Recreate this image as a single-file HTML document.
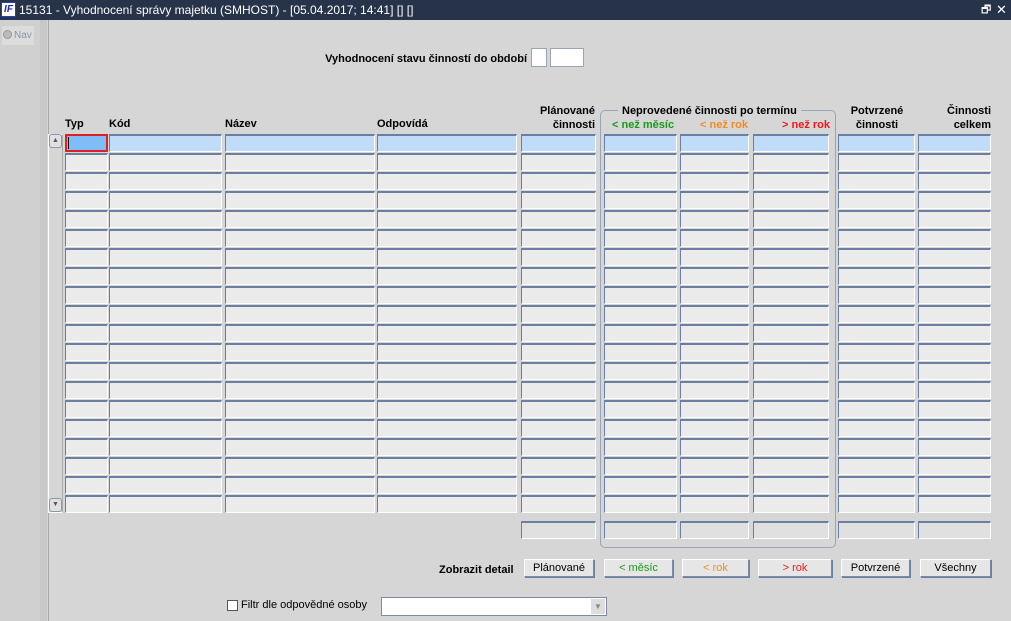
<!DOCTYPE html>
<html><head><meta charset="utf-8">
<style>
*{box-sizing:border-box;margin:0;padding:0}
body{width:1011px;height:621px;overflow:hidden;background:#d6d6d6;font-family:"Liberation Sans",Arial,sans-serif;font-size:11px;color:#000;position:relative}
.a{position:absolute;white-space:nowrap}
.tb{left:0;top:0;width:1011px;height:20px;background:#263349;color:#fff;font-size:12px;line-height:20px}
.c{position:absolute;height:18px;background:#ebebeb;border-top:2px solid #6b7fa3;border-left:1px solid #6b7fa3;border-right:1px solid #fff;border-bottom:1px solid #fff}
.c.s{background:#c0dcf8}
.h{position:absolute;font-weight:bold;font-size:11px;line-height:14px;white-space:nowrap}
.btn{position:absolute;top:559px;height:18px;background:#e6e6e6;border:1px solid #7b8aa8;border-top-color:#fff;border-left-color:#fff;box-shadow:1px 1px 0 #6b7fa3;text-align:center;line-height:16px;font-size:11px}
</style></head><body>
<div class="a tb">
 <div class="a" style="left:1px;top:2px;width:15px;height:15px;background:#fff;border:1px solid #2040c0;color:#1a2ab0;font-weight:bold;font-style:italic;font-size:10px;line-height:13px;text-align:center">IF</div>
 <div class="a" style="left:19px;top:0">15131 - Vyhodnocení správy majetku (SMHOST) - [05.04.2017; 14:41] [] []</div>
 <div class="a" style="left:981px;top:0;font-size:11px">🗗</div>
 <div class="a" style="left:996px;top:0;font-size:13px">✕</div>
</div>
<div class="a" style="left:0;top:20px;width:47px;height:601px;background:#d0d0d0;border-right:1px solid #b8b8b8"></div>
<div class="a" style="left:40px;top:20px;width:7px;height:601px;background:#c8c8c8"></div>
<div class="a" style="left:2px;top:26px;width:32px;height:19px;background:#dcdcdc;color:#8a96aa;font-size:10px;line-height:19px"><span style="display:inline-block;width:9px;height:9px;border-radius:50%;border:1px solid #999;background:#bbb;vertical-align:-1px;margin:0 2px 0 1px"></span>Nav</div>
<div class="a" style="left:48px;top:20px;width:963px;height:601px;background:#d6d6d6;border-left:1px solid #a8a8a8"></div>

<div class="h" style="left:300px;top:52px;width:227px;text-align:right">Vyhodnocení stavu činností do období</div>
<div class="a" style="left:531px;top:48px;width:16px;height:19px;background:#fff;border:1px solid #9aa4b4"></div>
<div class="a" style="left:550px;top:48px;width:34px;height:19px;background:#fff;border:1px solid #9aa4b4"></div>

<div class="a" style="left:600px;top:110px;width:236px;height:438px;border:1px solid #9aa4b4;border-radius:5px"></div>
<div class="h" style="left:618px;top:104px;background:#d6d6d6;padding:0 4px">Neprovedené činnosti po termínu</div>

<div class="h" style="left:65px;top:117px">Typ</div>
<div class="h" style="left:109px;top:117px">Kód</div>
<div class="h" style="left:225px;top:117px">Název</div>
<div class="h" style="left:377px;top:117px">Odpovídá</div>
<div class="h" style="left:521px;top:104px;width:74px;text-align:right">Plánované<br>činnosti</div>
<div class="h" style="left:612px;top:118px;color:#1a9a1a">&lt; než měsíc</div>
<div class="h" style="left:700px;top:118px;color:#f08c28">&lt; než rok</div>
<div class="h" style="left:730px;top:118px;width:100px;text-align:right;color:#f01818">&gt; než rok</div>
<div class="h" style="left:838px;top:104px;width:78px;text-align:center">Potvrzené<br>činnosti</div>
<div class="h" style="left:918px;top:104px;width:73px;text-align:right">Činnosti<br>celkem</div>

<div class="a" style="left:48px;top:134px;width:15px;height:379px;background:#d6d6d6;border:1px solid #fff;border-right-color:#aaa"></div>
<div class="a" style="left:49px;top:134px;width:13px;height:14px;border:1px solid #8a96aa;border-radius:3px;background:#e0e0e0;font-size:7px;color:#556;text-align:center;line-height:12px">▲</div>
<div class="a" style="left:49px;top:498px;width:13px;height:14px;border:1px solid #8a96aa;border-radius:3px;background:#e0e0e0;font-size:7px;color:#556;text-align:center;line-height:12px">▼</div>

<div id="g"></div>

<div class="h" style="left:439px;top:563px">Zobrazit detail</div>
<div class="btn" style="left:524px;width:70px">Plánované</div>
<div class="btn" style="left:604px;width:69px;color:#1a9a1a">&lt; měsíc</div>
<div class="btn" style="left:682px;width:67px;color:#f08c28">&lt; rok</div>
<div class="btn" style="left:758px;width:74px;color:#f01818">&gt; rok</div>
<div class="btn" style="left:841px;width:69px">Potvrzené</div>
<div class="btn" style="left:920px;width:71px">Všechny</div>

<div class="a" style="left:227px;top:600px;width:11px;height:11px;background:#fff;border:1px solid #555"></div>
<div class="a" style="left:241px;top:599px;font-size:11px">Filtr dle odpovědné osoby</div>
<div class="a" style="left:381px;top:597px;width:226px;height:19px;background:#fff;border:1px solid #7b8aa8"></div>
<div class="a" style="left:591px;top:599px;width:14px;height:15px;background:#ddd;color:#888;font-size:8px;text-align:center;line-height:15px">▼</div>

<script>
var cols=[[65,43],[109,113],[225,150],[377,140],[521,75],[604,73],[680,69],[753,76],[838,77],[918,73]];
var h='';
for(var r=0;r<20;r++){var y=134+r*19;
 for(var i=0;i<cols.length;i++){var st='left:'+cols[i][0]+'px;top:'+y+'px;width:'+cols[i][1]+'px;';
  if(r==0&&i==0)st+='background:#80bcf8;border:2px solid #e02020;';
  h+='<div class="c'+(r==0?' s':'')+'" style="'+st+'"></div>';}}
for(var i=4;i<cols.length;i++)h+='<div class="c" style="left:'+cols[i][0]+'px;top:521px;width:'+cols[i][1]+'px;background:#e0e0e0"></div>';
h+='<div class="a" style="left:68px;top:137px;width:1px;height:12px;background:#000"></div>';
document.getElementById('g').innerHTML=h;
</script>
</body></html>
